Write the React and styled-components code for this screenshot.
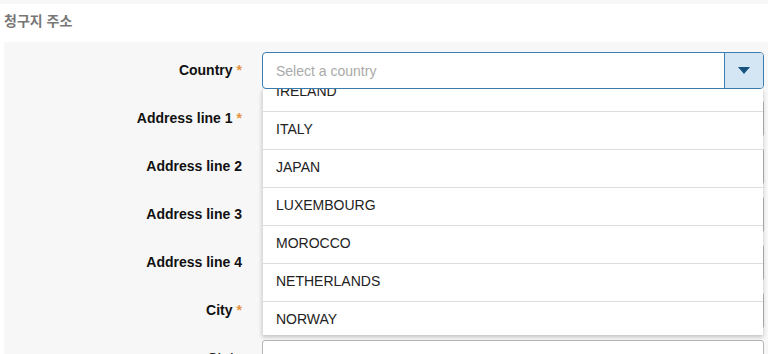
import React, { useEffect, useRef } from 'react';
import styled, { createGlobalStyle } from 'styled-components';

const GlobalStyle = createGlobalStyle`
  html, body {
    margin: 0;
    padding: 0;
    background: #fff;
    font-family: "Liberation Sans", Arial, "Noto Sans CJK KR", sans-serif;
    overflow: hidden;
  }
`;

const BG_GRAY = '#f7f7f7';
const BLUE = '#3b7db0';
const ORANGE = '#e8923f';
const ROW_H = 38;

const COUNTRIES = [
  'GERMANY', 'GREECE', 'HONG KONG', 'INDIA', 'IRELAND', 'ITALY', 'JAPAN',
  'LUXEMBOURG', 'MOROCCO', 'NETHERLANDS', 'NORWAY', 'POLAND', 'PORTUGAL',
];

const FIELDS = [
  { label: 'Address line 1', required: true },
  { label: 'Address line 2' },
  { label: 'Address line 3' },
  { label: 'Address line 4' },
  { label: 'City', required: true },
  { label: 'State' },
];

const Page = styled.div`
  width: 768px;
  height: 354px;
  overflow: hidden;
`;

const TopStrip = styled.div`
  height: 4px;
  background: ${BG_GRAY};
`;

const Heading = styled.h3`
  margin: 0;
  padding: 0 4px;
  height: 38px;
  line-height: 35px;
  font-size: 14px;
  font-weight: bold;
  color: #777;
`;

const Panel = styled.div`
  margin-left: 4px;
  background: ${BG_GRAY};
  padding: 10px 4px 20px 0;
  display: flex;
  flex-direction: column;
  gap: 11px;
`;

const Row = styled.div`
  display: grid;
  grid-template-columns: 258px 1fr;
  align-items: center;
  position: relative;
`;

const Label = styled.label`
  font-size: 14px;
  font-weight: bold;
  color: #111;
  text-align: right;
  padding-right: 20px;
  margin-top: -2px;
  white-space: nowrap;
`;

const Star = styled.span`
  color: ${ORANGE};
  margin-left: 4px;
`;

const SelectBox = styled.div`
  height: 37px;
  box-sizing: border-box;
  border: 1px solid ${BLUE};
  border-radius: 4px;
  background: #fff;
  display: flex;
  align-items: stretch;
  overflow: hidden;
`;

const Placeholder = styled.span`
  flex: 1;
  display: flex;
  align-items: center;
  padding-left: 13px;
  font-size: 14px;
  color: #aaa;
`;

const ArrowButton = styled.span`
  width: 38px;
  border-left: 1px solid ${BLUE};
  background: #d4e6f4;
  display: flex;
  align-items: center;
  justify-content: center;
`;

const Input = styled.div`
  height: 37px;
  box-sizing: border-box;
  border: 1px solid #b5b5b5;
  border-radius: 3px;
  background: #fff;
`;

const Menu = styled.ul`
  position: absolute;
  left: 258px;
  right: 1px;
  top: 37px;
  height: 246px;
  margin: 0;
  padding: 0;
  list-style: none;
  overflow: hidden;
  background: #fff;
  border-left: 1px solid #ddd;
  box-shadow: 0 2px 4px rgba(0, 0, 0, 0.22);
  z-index: 5;
`;

const Option = styled.li`
  height: ${ROW_H}px;
  box-sizing: border-box;
  padding: 0 0 3px 13px;
  border-top: 1px solid #ddd;
  display: flex;
  align-items: center;
  font-size: 14px;
  color: #222;
`;

function CountryMenu() {
  const ref = useRef(null);

  useEffect(() => {
    // keep IRELAND half scrolled off, as in the open list
    if (ref.current) ref.current.scrollTop = 4 * ROW_H + 16;
  }, []);

  return (
    <Menu ref={ref}>
      {COUNTRIES.map((c) => <Option key={c}>{c}</Option>)}
    </Menu>
  );
}

export default function App() {
  return (
    <Page>
      <GlobalStyle />
      <TopStrip />
      <Heading>청구지 주소</Heading>
      <Panel>
        <Row>
          <Label>Country<Star>*</Star></Label>
          <SelectBox>
            <Placeholder>Select a country</Placeholder>
            <ArrowButton>
              <svg width="12" height="8" viewBox="0 0 12 8">
                <path d="M0 0 L12 0 L6 7 Z" fill="#17527f" />
              </svg>
            </ArrowButton>
          </SelectBox>
          <CountryMenu />
        </Row>
        {FIELDS.map(({ label, required }) => (
          <Row key={label}>
            <Label>{label}{required && <Star>*</Star>}</Label>
            <Input />
          </Row>
        ))}
      </Panel>
    </Page>
  );
}
